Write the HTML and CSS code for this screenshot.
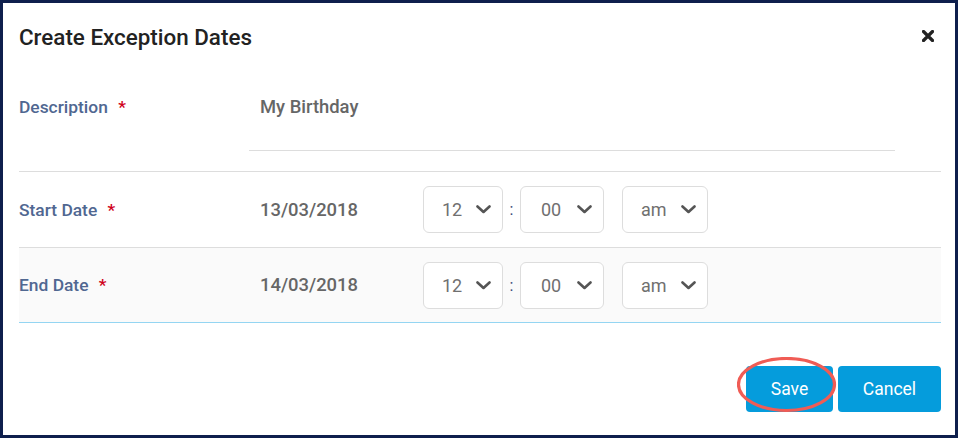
FILE: index.html
```html
<!DOCTYPE html>
<html>
<head>
<meta charset="utf-8">
<link rel="stylesheet" href="styles.css">
</head>
<body>
<div class="frame">
  <div class="modal">
    <div class="header">
      <h1 class="title">Create Exception Dates</h1>
      <svg class="close" width="12" height="12" viewBox="0 0 12 12"><path d="M1.5 1.5 L10.5 10.5 M10.5 1.5 L1.5 10.5" stroke="#222" stroke-width="3.2" stroke-linecap="round"/></svg>
    </div>
    <div class="body">
      <div class="desc-row">
        <div class="label">Description <span class="req">*</span></div>
        <div class="input">My Birthday</div>
      </div>
      <div class="row">
        <div class="label">Start Date <span class="req">*</span></div>
        <div class="date">13/03/2018</div>
        <div class="time">
          <div class="sel w80"><span>12</span><svg class="chev" width="15" height="9" viewBox="0 0 15 9"><path d="M1.5 1.5 L7.5 7 L13.5 1.5" fill="none" stroke="#555" stroke-width="2.6" stroke-linecap="round" stroke-linejoin="round"/></svg></div>
          <span class="colon">:</span>
          <div class="sel w84"><span>00</span><svg class="chev" width="15" height="9" viewBox="0 0 15 9"><path d="M1.5 1.5 L7.5 7 L13.5 1.5" fill="none" stroke="#555" stroke-width="2.6" stroke-linecap="round" stroke-linejoin="round"/></svg></div>
          <div class="sel w86 ampm"><span>am</span><svg class="chev" width="15" height="9" viewBox="0 0 15 9"><path d="M1.5 1.5 L7.5 7 L13.5 1.5" fill="none" stroke="#555" stroke-width="2.6" stroke-linecap="round" stroke-linejoin="round"/></svg></div>
        </div>
      </div>
      <div class="row alt">
        <div class="label">End Date <span class="req">*</span></div>
        <div class="date">14/03/2018</div>
        <div class="time">
          <div class="sel w80"><span>12</span><svg class="chev" width="15" height="9" viewBox="0 0 15 9"><path d="M1.5 1.5 L7.5 7 L13.5 1.5" fill="none" stroke="#555" stroke-width="2.6" stroke-linecap="round" stroke-linejoin="round"/></svg></div>
          <span class="colon">:</span>
          <div class="sel w84"><span>00</span><svg class="chev" width="15" height="9" viewBox="0 0 15 9"><path d="M1.5 1.5 L7.5 7 L13.5 1.5" fill="none" stroke="#555" stroke-width="2.6" stroke-linecap="round" stroke-linejoin="round"/></svg></div>
          <div class="sel w86 ampm"><span>am</span><svg class="chev" width="15" height="9" viewBox="0 0 15 9"><path d="M1.5 1.5 L7.5 7 L13.5 1.5" fill="none" stroke="#555" stroke-width="2.6" stroke-linecap="round" stroke-linejoin="round"/></svg></div>
        </div>
      </div>
    </div>
    <div class="footer">
      <button class="btn save">Save
        <svg class="ring" width="100" height="56" viewBox="0 0 100 56"><ellipse cx="49.5" cy="27.5" rx="48" ry="26" fill="none" stroke="#f05c55" stroke-width="3.2"/></svg>
      </button>
      <button class="btn cancel">Cancel</button>
    </div>
  </div>
</div>
</body>
</html>
```
FILE: styles.css
```css
* { box-sizing: border-box; }
html, body { margin: 0; padding: 0; }
body {
  width: 958px;
  height: 438px;
  overflow: hidden;
  font-family: Roboto, "Liberation Sans", Arial, sans-serif;
}
.frame {
  width: 958px;
  height: 438px;
  border: 3px solid #0e1f4d;
  background: #fff;
}
.modal {
  display: flex;
  flex-direction: column;
  height: 100%;
}
.header {
  height: 68px;
  display: flex;
  align-items: center;
  justify-content: space-between;
  padding: 0 21px 0 16px;
}
.title {
  margin: 0;
  font-size: 22.4px;
  line-height: 26px;
  font-weight: 500;
  color: #222;
}
.close { display: block; margin-top: -3px; }
.body {
  padding: 0 14px 0 16px;
}
.label {
  width: 230px;
  flex: none;
  font-size: 17.4px;
  line-height: 20px;
  font-weight: 500;
  color: #506791;
}
.req { color: #d0021b; margin-left: 6px; }
.desc-row {
  display: flex;
  align-items: flex-start;
  padding: 26px 46px 20px 0;
}
.input {
  flex: 1;
  padding: 0 11px 33px;
  border-bottom: 1px solid #ddd;
  font-size: 18.4px;
  line-height: 20px;
  font-weight: 500;
  color: #666;
}
.row {
  display: flex;
  align-items: center;
  height: 76px;
  border-top: 1px solid #ddd;
}
.row.alt {
  height: 76px;
  background: #fafafa;
  border-bottom: 1px solid #94d5f2;
}
.date {
  width: 174px;
  flex: none;
  padding-left: 11px;
  font-size: 18.4px;
  line-height: 20px;
  font-weight: 500;
  color: #666;
}
.time {
  display: flex;
  align-items: center;
}
.sel {
  height: 47px;
  border: 1px solid #ddd;
  border-radius: 6px;
  background: #fff;
  display: flex;
  align-items: center;
  justify-content: space-between;
  padding: 0 11px 0 18px;
  font-size: 18px;
  color: #707070;
}
.w80 { width: 80px; }
.w84 { width: 84px; padding-left: 20px; }
.w86 { width: 86px; }
.ampm { margin-left: 18px; }
.chev { display: block; }
.colon {
  width: 17px;
  text-align: center;
  font-size: 16px;
  color: #3b4a78;
}
.footer {
  display: flex;
  justify-content: flex-end;
  gap: 5px;
  padding: 43px 14px 0 0;
}
.btn {
  position: relative;
  height: 46px;
  padding: 0;
  border: none;
  border-radius: 4px;
  background: #059cdc;
  color: #fff;
  font-family: Roboto, "Liberation Sans", Arial, sans-serif;
  font-size: 17.5px;
}
.save { width: 87px; }
.cancel { width: 103px; }
.ring {
  position: absolute;
  left: -9px;
  top: -9px;
  pointer-events: none;
}
```
